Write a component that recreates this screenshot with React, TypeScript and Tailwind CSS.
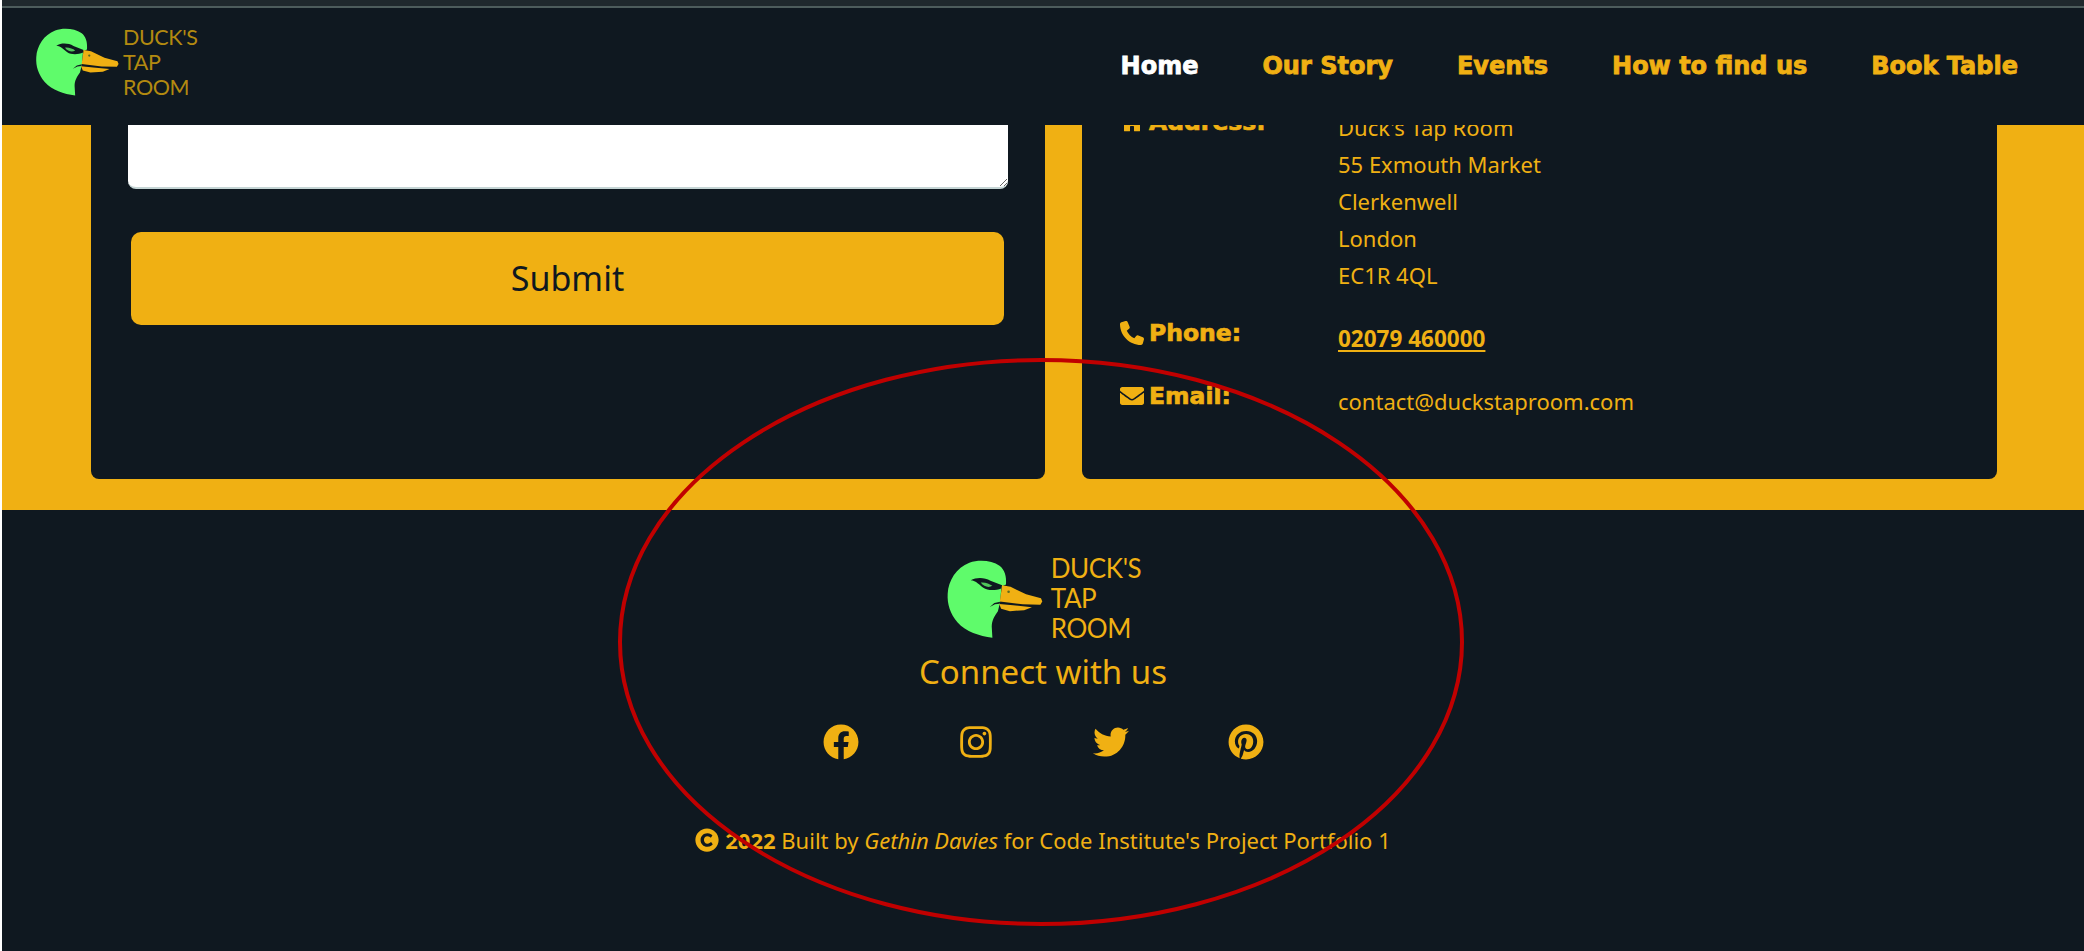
import React from "react";
import {
  FaFacebook,
  FaInstagram,
  FaTwitter,
  FaPinterest,
  FaHome,
  FaEnvelope,
  FaCopyright,
} from "react-icons/fa";
import { FaPhone } from "react-icons/fa6";

const navLinks = ["Our Story", "Events", "How to find us", "Book Table"];

function DuckHead({ className }: { className: string }) {
  return (
    <svg viewBox="130 48 305 250" className={className} aria-hidden="true">
      <path
        d="M276 294C235 288 195 276 168 246C146 220 136 190 138 158C140 118 165 78 205 63C235 52 275 56 298 72C314 84 320 104 318 130L304 136L300 184L293 212C283 226 274 240 274 260Z"
        fill="#5ffb6b"
      />
      <path d="M209 117C228 106 252 108 270 118L306 132L303 142C288 148 262 150 248 140C236 132 226 118 209 117Z" fill="#0f1820" />
      <path d="M240 124C252 122 268 128 276 134C266 140 250 138 240 124Z" fill="#4fc65a" />
      <path d="M268 199L282 187L300 183L298 189L284 191Z" fill="#0f1820" />
      <path d="M306 132L332 137L380 160L426 172L430 182L424 192L370 191L299 182Z" fill="#f0b013" />
      <circle cx="326" cy="152" r="4" fill="#5b6a20" />
      <path d="M297 190L340 194L398 200L374 209L330 212L303 205Z" fill="#f0b013" />
    </svg>
  );
}

function Logo({ small }: { small?: boolean }) {
  return (
    <div className={small ? "flex items-start gap-[3px]" : "flex items-start gap-[7px]"}>
      <DuckHead className={small ? "w-[86px] h-[71px]" : "w-[99px] h-[81px]"} />
      <div
        className={
          small
            ? "-mt-[1px] font-['Lato',sans-serif] text-[21.5px] leading-[25px] text-[#b38a10] tracking-[-0.4px]"
            : "-mt-[5px] font-['Lato',sans-serif] text-[26px] leading-[30px] text-[#f0b013] tracking-[-0.4px]"
        }
      >
        <div>DUCK&apos;S</div>
        <div>TAP</div>
        <div>ROOM</div>
      </div>
    </div>
  );
}

function InfoLabel({ icon, text }: { icon: React.ReactNode; text: string }) {
  return (
    <div className="-mt-[1px] flex items-center gap-[5px] self-start font-['DejaVu_Sans',sans-serif] font-bold text-[23.5px] leading-[28px] [-webkit-text-stroke:0.7px_#f0b013]">
      {icon}
      {text}
    </div>
  );
}

export default function App() {
  return (
    <div className="relative h-[951px] w-full overflow-hidden border-l-2 border-white bg-[#0f1820] font-['Noto_Sans',sans-serif] text-[#f0b013]">
      <div className="h-[6px] bg-[#1f282d]" />
      <div className="h-[2px] bg-[#4d5c5c]" />

      <header className="flex h-[117px] items-start justify-between pl-[32px] pr-[66px] pt-[18px]">
        <Logo small />
        <nav className="flex gap-[64px] pt-[26px] font-['DejaVu_Sans',sans-serif] font-bold text-[24px] leading-[28px] [-webkit-text-stroke:0.8px]">
          <a className="text-white">Home</a>
          {navLinks.map((link) => (
            <a key={link}>{link}</a>
          ))}
        </nav>
      </header>

      <main className="flex h-[385px] items-start gap-[37px] overflow-hidden bg-[#f0b013] pl-[89px] pr-[87px]">
        <section className="flex h-[354px] w-[954px] flex-col rounded-b-[8px] bg-[#0f1820] pl-[37px]">
          <textarea
            readOnly
            className="h-[64px] w-[880px] rounded-b-[8px] border-b-2 border-[#c5d5d5] bg-white"
          />
          <button className="ml-[3px] mt-[43px] h-[93px] w-[873px] rounded-[10px] bg-[#f0b013] text-[34px] text-[#0f1820]">
            Submit
          </button>
        </section>

        <section className="h-[354px] w-[915px] overflow-hidden rounded-b-[8px] bg-[#0f1820] pl-[38px] text-[22px]">
          <div className="-mt-[16px] grid grid-cols-[218px_1fr] gap-y-[26px]">
            <InfoLabel icon={<FaHome className="h-[24px] w-[24px]" />} text="Address:" />
            <div className="leading-[37px]">
              <div>Duck&apos;s Tap Room</div>
              <div>55 Exmouth Market</div>
              <div>Clerkenwell</div>
              <div>London</div>
              <div>EC1R 4QL</div>
            </div>
            <InfoLabel icon={<FaPhone className="h-[24px] w-[24px]" />} text="Phone:" />
            <a className="font-bold text-[22.5px] underline underline-offset-[3px] leading-[37px]">02079 460000</a>
            <InfoLabel icon={<FaEnvelope className="h-[24px] w-[24px]" />} text="Email:" />
            <div className="leading-[37px]">contact@duckstaproom.com</div>
          </div>
        </section>
      </main>

      <footer className="flex flex-col items-center pt-[48px]">
        <Logo />
        <p className="mt-[7px] text-[33px] leading-[44px]">Connect with us</p>
        <div className="mt-[30px] flex gap-[99px]">
          <FaFacebook className="h-[36px] w-[36px]" />
          <FaInstagram className="h-[36px] w-[36px]" />
          <FaTwitter className="h-[36px] w-[36px]" />
          <FaPinterest className="h-[36px] w-[36px]" />
        </div>
        <p className="mt-[65px] flex items-center gap-[6px] text-[22px] leading-[30px]">
          <FaCopyright className="h-[24px] w-[24px]" />
          <span>
            <b>2022</b> Built by <i>Gethin Davies</i> for Code Institute&apos;s Project Portfolio 1
          </span>
        </p>
      </footer>

      {/* red hand-drawn ring that sits over the page */}
      <svg className="pointer-events-none absolute -left-[2px] top-0 h-[951px] w-[2084px]" viewBox="0 0 2084 951" aria-hidden="true">
        <ellipse cx="1041" cy="642" rx="421" ry="282" fill="none" stroke="#c00000" strokeWidth="4" />
      </svg>
    </div>
  );
}
